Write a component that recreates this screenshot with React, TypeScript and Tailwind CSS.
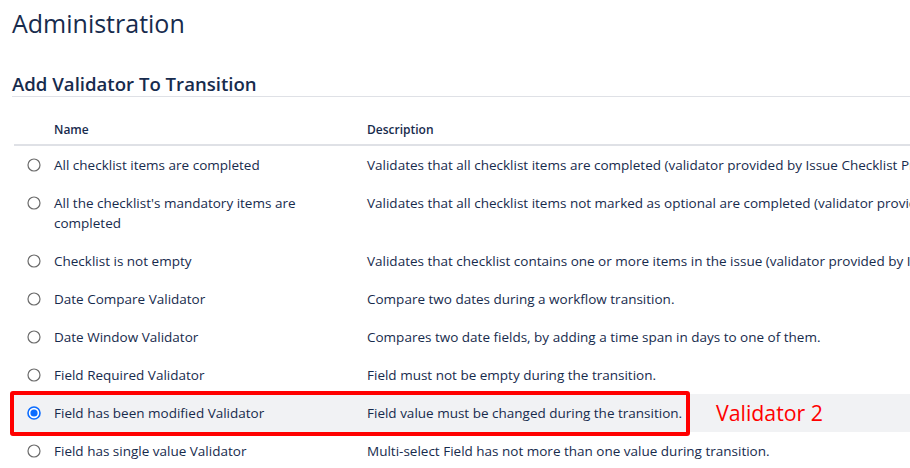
import React from "react";

type Row = { name: string; desc: string; selected?: boolean };

const rows: Row[] = [
  {
    name: "All checklist items are completed",
    desc: "Validates that all checklist items are completed (validator provided by Issue Checklist Pro)",
  },
  {
    name: "All the checklist's mandatory items are completed",
    desc: "Validates that all checklist items not marked as optional are completed (validator provided by Issue Checklist Pro)",
  },
  {
    name: "Checklist is not empty",
    desc: "Validates that checklist contains one or more items in the issue (validator provided by Issue Checklist Pro)",
  },
  { name: "Date Compare Validator", desc: "Compare two dates during a workflow transition." },
  {
    name: "Date Window Validator",
    desc: "Compares two date fields, by adding a time span in days to one of them.",
  },
  { name: "Field Required Validator", desc: "Field must not be empty during the transition." },
  {
    name: "Field has been modified Validator",
    desc: "Field value must be changed during the transition.",
    selected: true,
  },
  {
    name: "Field has single value Validator",
    desc: "Multi-select Field has not more than one value during transition.",
  },
];

function Radio({ checked }: { checked?: boolean }) {
  return (
    <svg width="14" height="14" viewBox="0 0 14 14" className="block">
      {checked ? (
        <>
          <circle cx="7" cy="7" r="6" fill="white" stroke="#0b6cff" strokeWidth="1.6" />
          <circle cx="7" cy="7" r="3.6" fill="#0b6cff" />
        </>
      ) : (
        <circle cx="7" cy="7" r="6" fill="white" stroke="#6b6b6b" strokeWidth="1.2" />
      )}
    </svg>
  );
}

export default function App() {
  return (
    <div
      className="w-[910px] h-[468px] overflow-hidden bg-white text-[#172b4d]"
      style={{ fontFamily: '"Open Sans", "Noto Sans", sans-serif' }}
    >
      <h1 className="mt-2 ml-3 text-[25px] leading-[30px] font-normal">Administration</h1>
      <h2 className="mt-[34px] ml-3 text-[18.6px] leading-[24px] font-semibold border-b border-[#dfe1e6]">
        Add Validator To Transition
      </h2>
      <div className="ml-[14px] mt-[19px]">
        <div className="grid grid-cols-[40px_313px_1fr] h-[30px] items-center border-b-2 border-[#dfe1e6] text-[12px] font-semibold">
          <div />
          <div>Name</div>
          <div>Description</div>
        </div>
        {rows.map((r) => (
          <div
            key={r.name}
            className={`relative grid grid-cols-[40px_313px_1fr] py-[9px] text-[13.5px] leading-[20px] ${
              r.selected ? "bg-[#f1f2f4]" : ""
            }`}
          >
            <div className="flex h-5 items-center pl-[13px]">
              <Radio checked={r.selected} />
            </div>
            <div className="pr-4">{r.name}</div>
            <div className="whitespace-nowrap">{r.desc}</div>
            {r.selected && (
              <>
                <div className="absolute left-[-4px] top-[-3px] w-[680px] h-[45px] border-4 border-[#ff0000] rounded-[3px]" />
                <div className="absolute left-[702px] top-0 h-full flex items-center text-[21.3px] leading-none text-[#ff0000]">
                  Validator 2
                </div>
              </>
            )}
          </div>
        ))}
      </div>
    </div>
  );
}
